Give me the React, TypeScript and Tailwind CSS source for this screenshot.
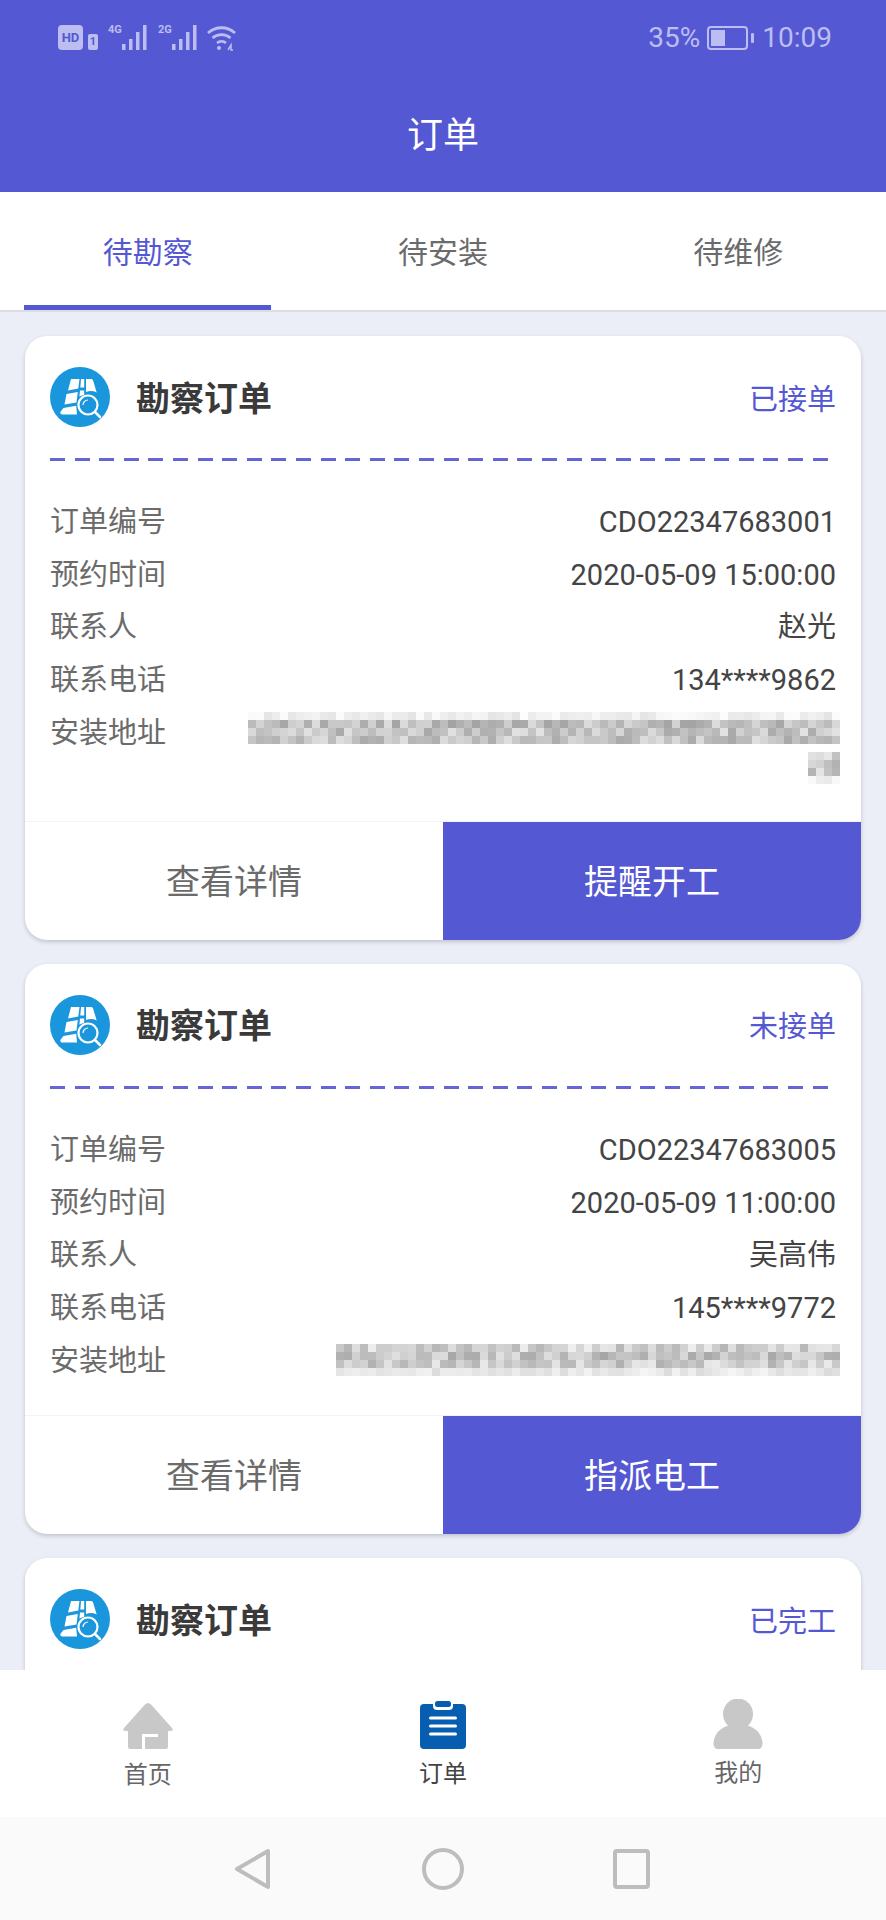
import React from "react";

const CJK = "font-['Roboto','Noto_Sans_CJK_SC',sans-serif]";

// mosaic standing in for the blurred address text
function Mosaic({ cols, seed, tones }: { cols: number; seed: number; tones: number[] }) {
  const cells: string[] = [];
  let s = seed;
  for (let i = 0; i < cols * tones.length; i++) {
    s = (s * 9301 + 49297) % 233280;
    const base = tones[Math.floor(i / cols)];
    const spread = base > 225 ? 26 : 58;
    const v = Math.min(255, Math.round(base - spread / 2 + (s / 233280) * spread));
    cells.push(`rgb(${v},${v},${v})`);
  }
  return (
    <div className="grid" style={{ gridTemplateColumns: `repeat(${cols}, 8px)` }}>
      {cells.map((c, i) => (
        <div key={i} className="h-2 w-2" style={{ backgroundColor: c }} />
      ))}
    </div>
  );
}

function SurveyIcon() {
  return (
    <svg viewBox="0 0 60 60" className="h-[60px] w-[60px] shrink-0">
      <circle cx="30" cy="30" r="30" fill="#1a96dc" />
      <path d="M21 12h8.500l-1.200 9.500-10.300 2zM16.500 27l11.300-2-1.300 10.500-12 2zM13.500 41l12.700-2.200.8 8.700H12.500c-1.500 0-2.400-1-2.200-2.500zM31 12h3.200v8.500H30.300zM30 23.500h4.200v4.300l-4.800 1.700zM36 12h5c1 0 1.800.6 2.100 1.600l3.600 11.900a13 13 0 0 0-10.700-.5z" fill="#fff" />
      <circle cx="38" cy="38" r="9.500" fill="#1a96dc" stroke="#fff" strokeWidth="2.200" />
      <path d="M45 45l5 5" stroke="#fff" strokeWidth="2.600" strokeLinecap="round" />
      <path d="M33 38a5 5 0 0 1 5-5" stroke="#fff" strokeWidth="1.200" fill="none" />
    </svg>
  );
}

function Signal({ label }: { label: string }) {
  return (
    <div className="relative h-[25px] w-[41px]">
      <span className="absolute left-0 top-[-2px] text-[11px] font-bold leading-[14px] text-[#bcbdf0]">{label}</span>
      <svg viewBox="0 0 41 25" className="absolute inset-0 h-[25px] w-[41px]">
        <path d="M14 19h3.500v6H14zM21 14h3.500v11H21zM28 7h3.500v18H28zM35 0h3.500v25H35z" fill="#bcbdf0" />
      </svg>
    </div>
  );
}

function StatusBar() {
  return (
    <div className="flex h-[75px] items-center justify-between pl-[58px] pr-[54px] text-[#bcbdf0]">
      <div className="flex items-center">
        <div className="flex h-[25px] w-[25px] items-center justify-center rounded-[4px] bg-[#bcbdf0] text-[13px] font-bold leading-none text-[#5558d3]">
          HD
        </div>
        <div className="ml-[5px] mr-[10px] mt-[8px] flex h-[16px] w-[10px] items-center justify-center rounded-[2px] bg-[#bcbdf0] text-[11px] font-bold leading-none text-[#5558d3]">
          1
        </div>
        <Signal label="4G" />
        <div className="w-[9px]" />
        <Signal label="2G" />
        <svg viewBox="0 0 32 26" className="ml-[7px] h-[26px] w-[32px]" fill="none" stroke="#bcbdf0" strokeWidth="2.800">
          <path d="M2 8a20 20 0 0 1 27 0" />
          <path d="M6.500 13a14 14 0 0 1 18 0" />
          <path d="M11 18a7 7 0 0 1 9 0" />
          <circle cx="13" cy="23" r="2" fill="#bcbdf0" stroke="none" />
          <path d="M22 25l3-5v5h2" strokeWidth="1.500" />
        </svg>
      </div>
      <div className="flex items-center font-['Roboto',sans-serif] text-[28px] leading-none">
        <span>35%</span>
        <div className="ml-[7px] h-[24px] w-[41px] rounded-[4px] border-2 border-[#bcbdf0] p-[2px]">
          <div className="h-full w-[14px] bg-[#bcbdf0]" />
        </div>
        <div className="ml-[3px] h-[10px] w-[3px] rounded-[1px] bg-[#bcbdf0]" />
        <span className="ml-[8px]">10:09</span>
      </div>
    </div>
  );
}

type Order = {
  status: string;
  no: string;
  time: string;
  contact: string;
  phone: string;
  action: string;
  mosaic: React.ReactNode;
};

const orders: Order[] = [
  {
    status: "已接单",
    no: "CDO22347683001",
    time: "2020-05-09 15:00:00",
    contact: "赵光",
    phone: "134****9862",
    action: "提醒开工",
    mosaic: (
      <div className="-mr-[4px] flex flex-col items-end gap-2 pb-[9px] pt-[5px]">
        <Mosaic cols={74} seed={17} tones={[240, 192, 198, 198]} />
        <Mosaic cols={4} seed={91} tones={[205, 190, 205, 240]} />
      </div>
    ),
  },
  {
    status: "未接单",
    no: "CDO22347683005",
    time: "2020-05-09 11:00:00",
    contact: "吴高伟",
    phone: "145****9772",
    action: "指派电工",
    mosaic: (
      <div className="-mr-[4px] pt-[9px]">
        <Mosaic cols={63} seed={53} tones={[210, 195, 205, 232]} />
      </div>
    ),
  },
];

function CardHead({ status }: { status: string }) {
  return (
    <div className="flex h-[98px] items-center pl-[25px] pr-[25px] pt-[24px]">
      <SurveyIcon />
      <span className="ml-[26px] mt-[3px] flex-1 text-[34px] font-bold leading-none text-[#3a3a3a]">勘察订单</span>
      <span className="mt-[6px] text-[29px] leading-none text-[#5558d3]">{status}</span>
    </div>
  );
}

function Row({ label, children }: { label: string; children: React.ReactNode }) {
  return (
    <div className="flex justify-between">
      <span className="shrink-0 text-[#6b6b6b]">{label}</span>
      <div className="text-[#444]">{children}</div>
    </div>
  );
}

function OrderCard({ order }: { order: Order }) {
  return (
    <div className="shrink-0 overflow-hidden rounded-[22px] bg-white shadow-[0_2px_4px_rgba(0,0,0,0.18)]">
      <CardHead status={order.status} />
      <div className="ml-[25px] mt-[24px] h-[3px] w-[778px] bg-[repeating-linear-gradient(90deg,#6466d6_0,#6466d6_15px,transparent_15px,transparent_24.600px)]" />
      <div className="px-[25px] pt-[35px] text-[29px] leading-[52.700px]">
        <Row label="订单编号">{order.no}</Row>
        <Row label="预约时间">{order.time}</Row>
        <Row label="联系人">{order.contact}</Row>
        <Row label="联系电话">{order.phone}</Row>
        <div className="flex justify-between">
          <span className="shrink-0 text-[#6b6b6b]">安装地址</span>
          {order.mosaic}
        </div>
      </div>
      <div className="mt-[28px] flex h-[119px] border-t border-[#f3f3f3] text-[34px]">
        <div className="flex flex-1 items-center justify-center pt-[3px] text-[#6b6b6b]">查看详情</div>
        <div className="flex flex-1 items-center justify-center bg-[#5558d3] pt-[3px] text-white">{order.action}</div>
      </div>
    </div>
  );
}

function Tabs() {
  const tabs = ["待勘察", "待安装", "待维修"];
  return (
    <div className="flex h-[120px] border-b-2 border-[#dcdde2] bg-white">
      {tabs.map((t, i) => (
        <div key={t} className="flex flex-1 flex-col">
          <div
            className={
              i === 0
                ? "flex flex-1 items-center justify-center pt-[7px] text-[30px] text-[#5558d3]"
                : "flex flex-1 items-center justify-center pt-[7px] text-[30px] text-[#6b6b6b]"
            }
          >
            {t}
          </div>
          <div className={i === 0 ? "mx-[24px] h-[5px] bg-[#5558d3]" : "h-[5px]"} />
        </div>
      ))}
    </div>
  );
}

function BottomNav() {
  return (
    <div className="flex h-[147px] shrink-0 bg-white text-[24px] leading-none text-[#666]">
      <div className="flex flex-1 flex-col items-center pt-[33px]">
        <svg viewBox="0 0 50 46" className="h-[46px] w-[50px]">
          <path d="M25 0c1 0 2 .5 3 1.500L49 25c1.200 1.400.6 3-1 3h-3v15.500a2.500 2.500 0 0 1-2.500 2.500H22V34h13v-3H19v15H7.500A2.500 2.500 0 0 1 5 43.500V28H2c-1.600 0-2.200-1.600-1-3L22 1.500C23 .5 24 0 25 0z" fill="#c8c8c8" />
        </svg>
        <span className="mt-[14px]">首页</span>
      </div>
      <div className="flex flex-1 flex-col items-center pt-[31px]">
        <svg viewBox="0 0 46 48" className="h-[48px] w-[46px]">
          <path d="M4 3h9v2a4 4 0 0 0 4 4h12a4 4 0 0 0 4-4V3h9a4 4 0 0 1 4 4v37a4 4 0 0 1-4 4H4a4 4 0 0 1-4-4V7a4 4 0 0 1 4-4z" fill="#075db0" />
          <rect x="15" y="0" width="16" height="6" rx="2.500" fill="#075db0" />
          <path d="M10.500 17h25M10.500 25h25M10.500 33h25" stroke="#fff" strokeWidth="3" strokeLinecap="round" />
        </svg>
        <span className="mt-[13px] text-[#444]">订单</span>
      </div>
      <div className="flex flex-1 flex-col items-center pt-[29px]">
        <svg viewBox="0 0 50 50" className="h-[50px] w-[50px]">
          <ellipse cx="25" cy="15" rx="15" ry="15.500" fill="#c8c8c8" />
          <path d="M17 26c-9 2.500-16 8-16.500 18.500C.4 47.500 2 50 5 50h40c3 0 4.600-2.500 4.500-5.500C49 34 42 28.500 33 26z" fill="#c8c8c8" />
        </svg>
        <span className="mt-[12px]">我的</span>
      </div>
    </div>
  );
}

function SystemNav() {
  return (
    <div className="flex h-[103px] shrink-0 items-start justify-center bg-[#fafafa] pt-[30px]">
      <svg viewBox="0 0 886 44" className="h-[44px] w-[886px]" fill="none" stroke="#bdbdbd" strokeWidth="4" strokeLinejoin="round">
        <path d="M268 4v36L237 22z" />
        <circle cx="443" cy="22" r="19" />
        <rect x="615" y="4" width="33" height="36" rx="2" />
      </svg>
    </div>
  );
}

export default function App() {
  return (
    <div className={`flex h-[1920px] w-[886px] flex-col overflow-hidden bg-[#ebeef7] ${CJK}`}>
      <header className="h-[192px] shrink-0 bg-[#5558d3]">
        <StatusBar />
        <div className="pt-[43px] text-center text-[36px] leading-none text-white">订单</div>
      </header>
      <Tabs />
      <main className="flex min-h-0 flex-1 flex-col gap-[24px] overflow-hidden px-[25px] pt-[24px]">
        {orders.map((o) => (
          <OrderCard key={o.no} order={o} />
        ))}
        <div className="h-[200px] shrink-0 overflow-hidden rounded-[22px] bg-white shadow-[0_2px_4px_rgba(0,0,0,0.18)]">
          <CardHead status="已完工" />
        </div>
      </main>
      <BottomNav />
      <SystemNav />
    </div>
  );
}
